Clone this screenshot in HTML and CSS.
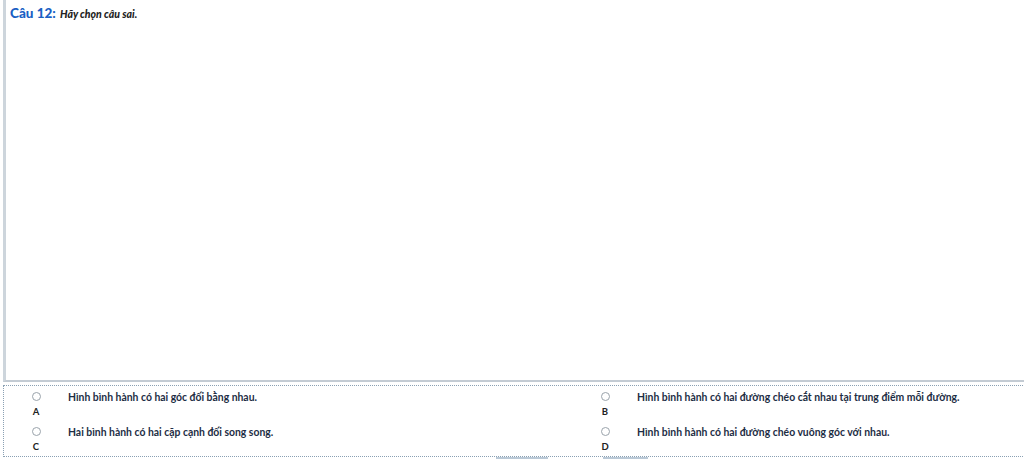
FILE: index.html
```html
<!DOCTYPE html>
<html lang="vi">
<head>
    <meta charset="UTF-8">
    <meta name="viewport" content="width=device-width, initial-scale=1.0">
    <title>Câu 12</title>
    <link rel="stylesheet" href="styles.css">
</head>
<body>
    <div class="page">
        <div class="question">
            <span class="q-number">Câu 12:</span>
            <span class="q-text">Hãy chọn câu sai.</span>
        </div>

        <div class="answers">
            <label class="answer">
                <span class="answer-key">
                    <input type="radio" name="q12" class="radio">
                    <span class="key">A</span>
                </span>
                <span class="answer-text">Hình bình hành có hai góc đối bằng nhau.</span>
            </label>
            <label class="answer">
                <span class="answer-key">
                    <input type="radio" name="q12" class="radio">
                    <span class="key">B</span>
                </span>
                <span class="answer-text">Hình bình hành có hai đường chéo cắt nhau tại trung điểm mỗi đường.</span>
            </label>
            <label class="answer">
                <span class="answer-key">
                    <input type="radio" name="q12" class="radio">
                    <span class="key">C</span>
                </span>
                <span class="answer-text">Hai bình hành có hai cặp cạnh đối song song.</span>
            </label>
            <label class="answer">
                <span class="answer-key">
                    <input type="radio" name="q12" class="radio">
                    <span class="key">D</span>
                </span>
                <span class="answer-text">Hình bình hành có hai đường chéo vuông góc với nhau.</span>
            </label>
        </div>

        <div class="tabs">
            <span class="tab"></span>
            <span class="tab tab-second"></span>
        </div>
    </div>
</body>
</html>
```

FILE: styles.css
```css
html {
    overflow: hidden;
}

body {
    margin: 0;
    background-color: #fff;
    font-family: Lato, "Open Sans", sans-serif;
    color: #1d2d44;
}

.page {
    width: 1140px;
    padding-left: 3px;
}

.question {
    height: 378px;
    padding: 2px 4px 0;
    border-left: 3px solid #cdd5dc;
    border-bottom: 2px solid #c3cbd3;
}

.q-number {
    font-size: 13.5px;
    font-weight: 900;
    color: #1a5fc4;
}

.q-text {
    font-size: 10.5px;
    font-weight: 900;
    font-style: italic;
    color: #222;
}

.answers {
    margin-top: 3px;
    border: 1px dotted #8aa0b3;
    display: grid;
    grid-template-columns: 1fr 1fr;
    grid-template-rows: 35px 33px;
    padding-top: 2px;
}

.answer {
    display: flex;
    align-items: flex-start;
}

.answer-key {
    width: 64px;
    display: flex;
    flex-direction: column;
    align-items: center;
}

.radio {
    width: 9px;
    height: 9px;
    margin: 4px 0 0;
    appearance: none;
    border: 1px solid #9aa3ab;
    border-radius: 50%;
    background: #fff;
}

.key {
    margin-top: 5px;
    font-size: 9.5px;
    font-weight: bold;
    color: #222;
}

.answer-text {
    font-size: 10.4px;
    font-weight: bold;
    padding-top: 3px;
}

.tabs {
    display: flex;
    padding-left: 493px;
    gap: 55px;
}

.tab {
    width: 52px;
    height: 2px;
    background: #b9c8d6;
}

.tab-second {
    width: 45px;
}
```
